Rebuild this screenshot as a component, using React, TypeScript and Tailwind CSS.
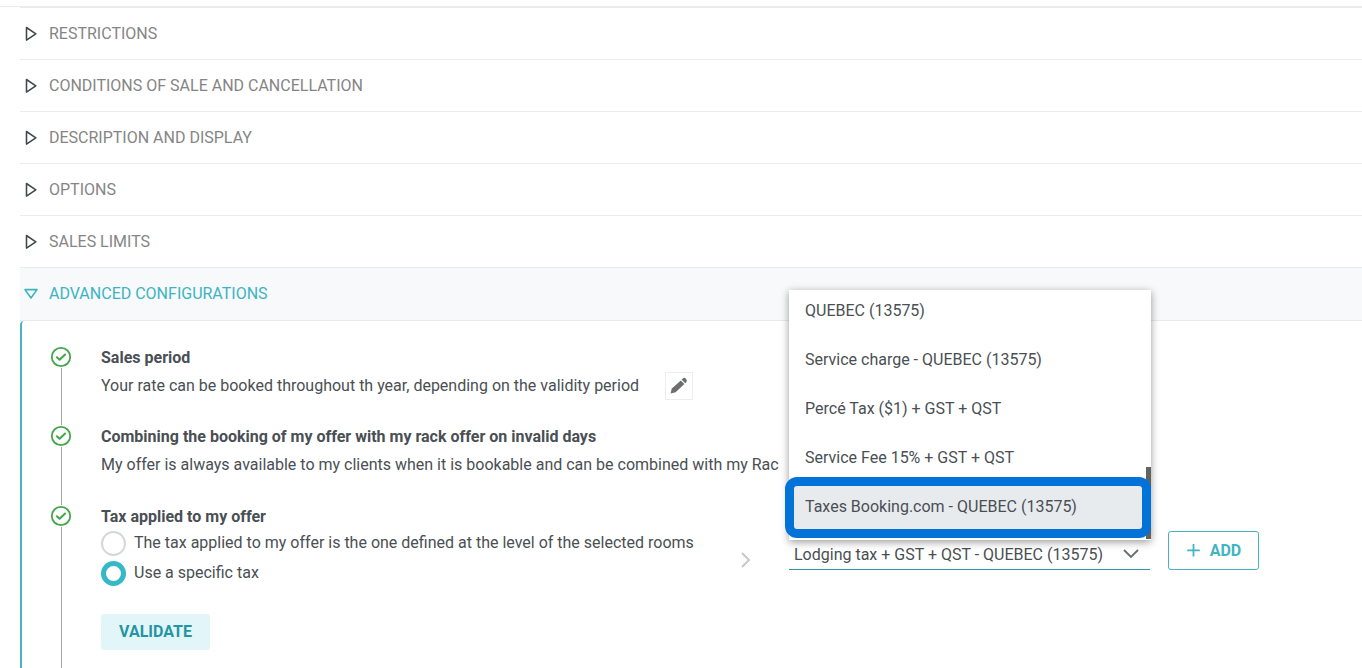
import React, { useState } from "react";

interface StepProps {
  title: string;
  children: React.ReactNode;
}

const SECTIONS = [
  "RESTRICTIONS",
  "CONDITIONS OF SALE AND CANCELLATION",
  "DESCRIPTION AND DISPLAY",
  "OPTIONS",
  "SALES LIMITS",
];

const TAX_OPTIONS = [
  "QUEBEC (13575)",
  "Service charge - QUEBEC (13575)",
  "Percé Tax ($1) + GST + QST",
  "Service Fee 15% + GST + QST",
  "Taxes Booking.com - QUEBEC (13575)",
];

const TAX_SCOPES = [
  {
    value: "rooms",
    label: "The tax applied to my offer is the one defined at the level of the selected rooms",
  },
  { value: "specific", label: "Use a specific tax" },
];

function TriangleIcon({ open }: { open?: boolean }) {
  return (
    <svg
      className="h-4 w-4 shrink-0"
      viewBox="0 0 16 16"
      fill="none"
      stroke="currentColor"
      strokeWidth="1.6"
      strokeLinejoin="round"
    >
      <path d={open ? "M2 3.6H14L8 12Z" : "M3.5 1.5V14.1L12.8 7.8Z"} />
    </svg>
  );
}

function CheckIcon() {
  return (
    <svg
      className="h-[22px] w-[22px] shrink-0"
      viewBox="0 0 22 22"
      fill="none"
      stroke="#43a64b"
    >
      <circle cx="11" cy="11" r="9.2" strokeWidth="1.8" />
      <path
        d="M6.9 11.3L9.6 13.8L15.1 8.5"
        strokeWidth="2"
        strokeLinecap="round"
        strokeLinejoin="round"
      />
    </svg>
  );
}

function Step({ title, children }: StepProps) {
  return (
    <li className="flex">
      <div className="flex w-[22px] shrink-0 flex-col items-center">
        <CheckIcon />
        <div className="w-px flex-1 bg-[#a3a5a6]" />
      </div>
      <div className="ml-[29px] flex-1">
        <h3 className="font-bold leading-[23px]">{title}</h3>
        {children}
      </div>
    </li>
  );
}

export default function App() {
  const [scope, setScope] = useState("specific");

  return (
    <div className="min-h-screen overflow-hidden bg-white font-['Roboto',sans-serif] text-base text-[#4a4f54]">
      <header className="h-[7px] border-b border-[#ececec]" />
      <main className="ml-5">
        {SECTIONS.map((section) => (
          <button
            key={section}
            type="button"
            className="flex h-[52px] w-full items-center gap-[10px] border-t border-[#ebebeb] pl-[3px] text-left text-[#858585]"
          >
            <span className="text-[#454a4e]">
              <TriangleIcon />
            </span>
            {section}
          </button>
        ))}
        <button
          type="button"
          aria-expanded="true"
          className="flex h-[54px] w-full items-center gap-[10px] border-y border-[#e8eaec] bg-[#f7f9fb] pl-[3px] text-left text-[#3db4c1]"
        >
          <TriangleIcon open />
          ADVANCED CONFIGURATIONS
        </button>

        <section className="rounded-tl border-l-2 border-[#46b5bf] pl-7 pt-[25px]">
          <ol>
            <Step title="Sales period">
              <div className="mb-[25px] mt-[3px] flex items-center gap-[26px]">
                <p className="whitespace-nowrap">
                  Your rate can be booked throughout th year, depending on the validity period
                </p>
                <button
                  type="button"
                  aria-label="Edit"
                  className="flex h-7 w-7 items-center justify-center border border-[#ededed] text-[#6b6f71]"
                >
                  <svg className="h-5 w-5 shrink-0" viewBox="0 0 20 20" fill="currentColor">
                    <path d="M1.6 17.6L2.8 12.6L11.8 4.4L15.4 8L6.6 16.2Z" />
                    <path d="M12.6 3.6L13.8 2.4Q15.3 1.2 16.9 2.7T17.5 6L16.2 7.2Z" />
                  </svg>
                </button>
              </div>
            </Step>
            <Step title="Combining the booking of my offer with my rack offer on invalid days">
              <p className="mb-7 mt-[5px] whitespace-nowrap">
                My offer is always available to my clients when it is bookable and can be combined
                with my Rac
              </p>
            </Step>
            <Step title="Tax applied to my offer">
              <div className="flex items-start">
                <fieldset className="w-[640px] shrink-0">
                  {TAX_SCOPES.map((item) => (
                    <label key={item.value} className="flex h-[30px] items-center gap-2">
                      <input
                        type="radio"
                        name="tax-scope"
                        checked={scope === item.value}
                        onChange={() => setScope(item.value)}
                        className="h-[25px] w-[25px] appearance-none rounded-full border-2 border-[#d4d7da] bg-white checked:border-5 checked:border-[#35b8c8]"
                      />
                      {item.label}
                    </label>
                  ))}
                </fieldset>
                <svg
                  className="mt-6 h-4 w-3 shrink-0"
                  viewBox="0 0 12 16"
                  fill="none"
                  stroke="#c6c8ca"
                  strokeWidth="2"
                >
                  <path d="M1 1L8 8L1 15" />
                </svg>

                <div className="relative ml-9 mt-3 w-[361px] shrink-0">
                  <select
                    aria-label="Specific tax"
                    className="h-[30px] w-full appearance-none border-b border-[#2c98a6] pl-[5px] pr-10 outline-none"
                  >
                    <option>Lodging tax + GST + QST - QUEBEC (13575)</option>
                  </select>
                  <svg
                    className="pointer-events-none absolute right-[11px] top-2 h-3 w-4"
                    viewBox="0 0 16 12"
                    fill="none"
                    stroke="#696d70"
                    strokeWidth="1.8"
                  >
                    <path d="M1 2L8 9L15 2" />
                  </svg>

                  {/* Open option list */}
                  <div className="absolute bottom-[30px] left-0 h-[250px] w-[362px] shadow-[0_2px_8px_rgba(0,0,0,0.4)]">
                    <ul
                      role="listbox"
                      className="flex h-full flex-col justify-end overflow-hidden bg-white pb-[9px]"
                    >
                      {TAX_OPTIONS.map((option) => (
                        <li
                          key={option}
                          role="option"
                          aria-selected={option === TAX_OPTIONS[4]}
                          className="flex h-[49px] shrink-0 items-center px-4 aria-selected:bg-[#e8ebee]"
                        >
                          {option}
                        </li>
                      ))}
                    </ul>
                    <div className="absolute bottom-px right-0 h-18 w-[5px] bg-[#606264]" />
                    <div className="absolute -left-1 bottom-[2px] right-0 h-[61px] rounded-xl border-9 border-[#0072d8]" />
                  </div>
                </div>

                <button
                  type="button"
                  className="ml-[18px] mt-[3px] flex h-[39px] w-[91px] shrink-0 items-center justify-center gap-[10px] rounded-[3px] border border-[#45b3bf] font-bold text-[#42b5c1]"
                >
                  <svg
                    className="h-[14px] w-[14px]"
                    viewBox="0 0 14 14"
                    fill="none"
                    stroke="currentColor"
                    strokeWidth="1.8"
                  >
                    <path d="M7.5 0V12.6M1.2 6.3H13.8" />
                  </svg>
                  ADD
                </button>
              </div>
              <button
                type="button"
                className="mb-10 mt-[26px] h-9 w-[109px] rounded-[3px] bg-[#e2f6f9] font-bold text-[#2595a3]"
              >
                VALIDATE
              </button>
            </Step>
          </ol>
        </section>
      </main>
    </div>
  );
}
